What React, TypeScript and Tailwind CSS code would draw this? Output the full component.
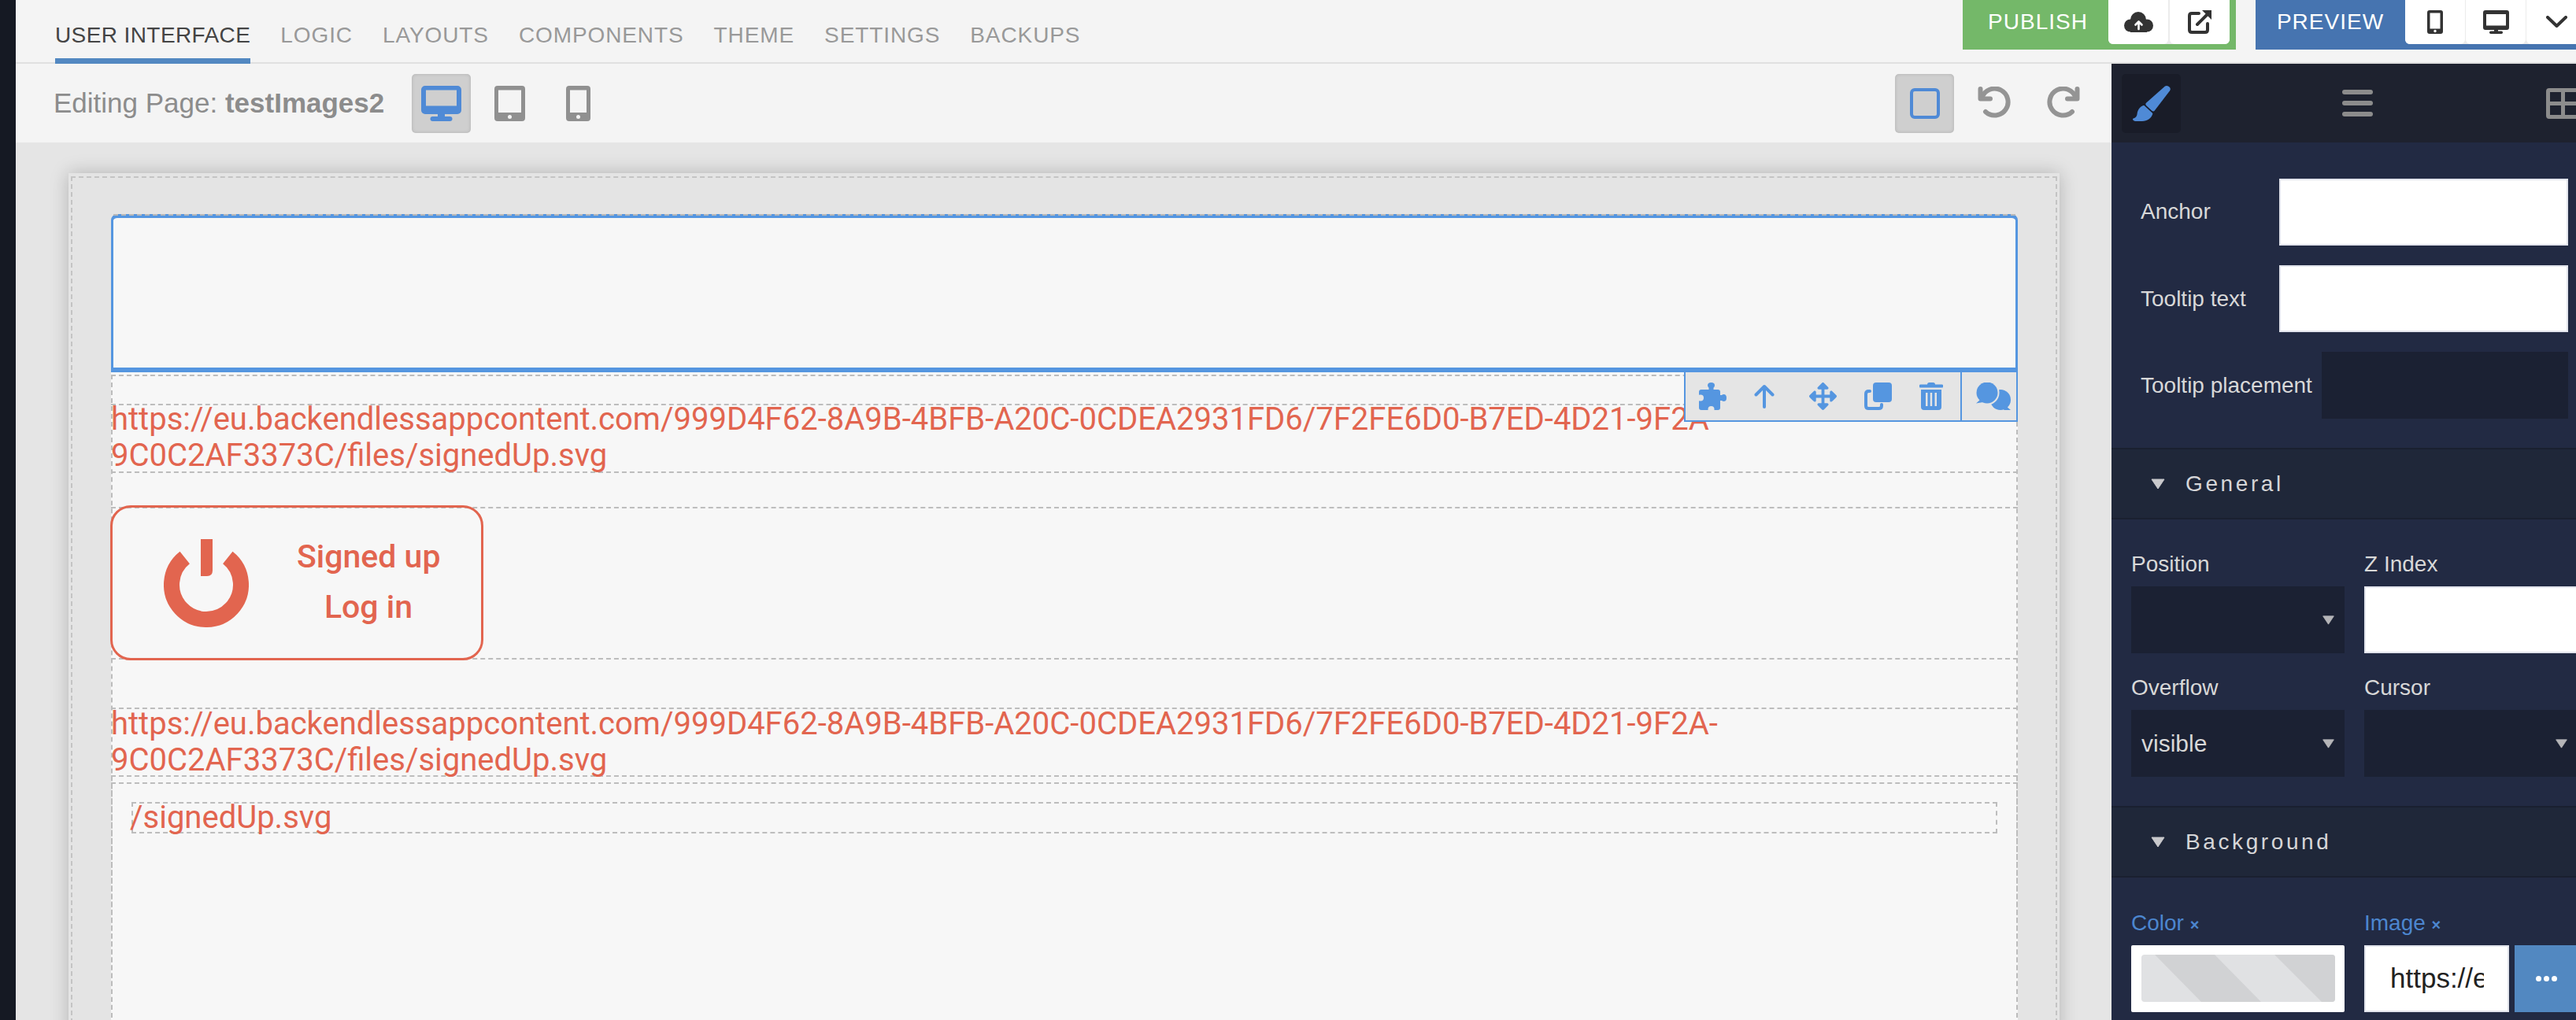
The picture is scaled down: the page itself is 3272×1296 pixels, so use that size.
import { ReactNode } from 'react'
import { FaArrowsAlt } from 'react-icons/fa'

const tabs = ['USER INTERFACE', 'LOGIC', 'LAYOUTS', 'COMPONENTS', 'THEME', 'SETTINGS', 'BACKUPS']
const fileUrl = 'https://eu.backendlessappcontent.com/999D4F62-8A9B-4BFB-A20C-0CDEA2931FD6/7F2FE6D0-B7ED-4D21-9F2A-'

function Desktop({ className }: { className: string }) {
  return (
    <svg viewBox="0 0 51 45" className={className} fill="currentColor">
      <path fillRule="evenodd" d="M5 0h41a5 5 0 0 1 5 5v26a5 5 0 0 1-5 5H5a5 5 0 0 1-5-5V5a5 5 0 0 1 5-5zm1 5.500v20h39v-20z" />
      <rect x="21" y="35" width="9" height="6" />
      <rect x="11.500" y="39" width="28" height="6" rx="3" />
    </svg>
  )
}

function Device({ w, className }: { w: number; className: string }) {
  const cx = w / 2
  return (
    <svg viewBox={`0 0 ${w} 45`} className={className} fill="currentColor">
      <path fillRule="evenodd" d={`M4 0h${w - 8}a4 4 0 0 1 4 4v37a4 4 0 0 1-4 4H4a4 4 0 0 1-4-4V4a4 4 0 0 1 4-4zm1 5.500v28.500h${w - 10}V5.500z`} />
      <circle cx={cx} cy="39.500" r="2.500" fill="#f4f4f4" />
    </svg>
  )
}

function Undo({ className }: { className: string }) {
  return (
    <svg viewBox="0 0 42 42" className={className} fill="none" stroke="currentColor" strokeWidth="6" strokeLinecap="round" strokeLinejoin="round">
      <path d="M3.500 3v12.500H16" />
      <path d="M5.500 14A17 17 0 1 1 10 32" />
    </svg>
  )
}

function Brush() {
  return (
    <svg viewBox="0 0 48 45" className="w-[48px] h-[45px] text-[#4f8ad6]" fill="currentColor">
      <path d="M41 .6c2-1.300 5-.3 6.300 2 .6 1.200.5 2.600-.2 3.700L27.800 31.500c-.8 1-2.200 1.200-3.200.4l-7.600-7c-.9-.9-.9-2.300 0-3.200z" />
      <path d="M15 25.500l9.800 8.900c.5.400.6 1 .4 1.600C23.300 41.600 18.500 44.800 12 44.900H3c-2.600 0-3.800-2.400-2.400-3.500 3.200-.8 4.700-2.700 5-5.700.4-4.300 2.900-8.600 7.200-10.400.8-.4 1.600-.3 2.200.2z" />
    </svg>
  )
}

function Caret({ className }: { className: string }) {
  return (
    <svg viewBox="0 0 18 14" className={className} fill="currentColor">
      <path d="M1 1h16L9 13z" stroke="currentColor" strokeLinejoin="round" />
    </svg>
  )
}

function HeaderButton({ children }: { children: ReactNode }) {
  return (
    <div className="w-[76px] h-[56px] shrink-0 bg-white rounded-b-[6px] flex items-center justify-center text-[#333] pb-[1px]">
      {children}
    </div>
  )
}

function Section({ title }: { title: string }) {
  return (
    <div className="h-[91px] bg-[#1f2739] border-y-2 border-[#1a2030] flex items-center pl-[50px] gap-[26px]">
      <Caret className="w-[18px] h-[14px] text-[#c9c9cc]" />
      <span className="text-[28px] tracking-[3.6px] text-[#d6d6d8] leading-none">{title}</span>
    </div>
  )
}

function SelectBox({ value, className }: { value?: string; className?: string }) {
  return (
    <div className={`h-[85px] bg-[#1b2133] flex items-center justify-between pl-[13px] pr-[12px] text-[30px] text-[#d8d8d8] ${className ?? ''}`}>
      <span>{value}</span>
      <Caret className="w-[17px] h-[12px] text-[#b5b5b8]" />
    </div>
  )
}

function TextBox({ className }: { className?: string }) {
  return <div className={`h-[85px] bg-white border-2 border-[#e2e4ec] ${className ?? ''}`} />
}

function FieldLabel({ children }: { children: ReactNode }) {
  return <div className="text-[28px] leading-[28px] mb-[14px] text-[#d8d8d8]">{children}</div>
}

function ElementToolbar() {
  return (
    <div className="absolute top-[calc(100%+6px)] right-[-3px] z-10 w-[424px] h-[63px] bg-[#e5e5e5] border-2 border-t-0 border-[#5596e0] flex items-center text-[#5596e0]">
      <div className="flex items-center w-[351px] h-full border-r-2 border-[#5596e0] pl-[17px]">
        <svg viewBox="0 0 35 35" className="w-[35px] h-[35px]" fill="currentColor">
          <rect x="0" y="9" width="27" height="26" rx="3" />
          <rect x="12.500" y="3" width="6" height="8" />
          <ellipse cx="15.500" cy="3.500" rx="4.500" ry="3.500" />
          <rect x="25" y="16" width="6" height="7" />
          <ellipse cx="31.500" cy="19.500" rx="3.500" ry="4.500" />
          <circle cx="2" cy="19.500" r="4" fill="#e5e5e5" />
          <circle cx="15.500" cy="34" r="4" fill="#e5e5e5" />
        </svg>
        <svg viewBox="0 0 26 31" className="w-[26px] h-[31px] ml-[35px]" fill="none" stroke="currentColor" strokeWidth="4" strokeLinecap="round" strokeLinejoin="round">
          <path d="M13 29V3M2.500 13.500L13 3l10.500 10.500" />
        </svg>
        <FaArrowsAlt className="w-[35px] h-[35px] ml-[44px]" />
        <svg viewBox="0 0 35 35" className="w-[35px] h-[35px] ml-[35px]" fill="none">
          <rect x="11" y="0" width="24" height="25" rx="4" fill="currentColor" />
          <path d="M7 11H5.500Q2 11 2 14.500V29.500Q2 33 5.500 33H18.500Q22 33 22 29.500V28" stroke="currentColor" strokeWidth="4" strokeLinecap="round" />
        </svg>
        <svg viewBox="0 0 30 35" className="w-[30px] h-[35px] ml-[35px]" fill="currentColor">
          <path d="M10 2.500Q10 0 12.500 0h5Q20 0 20 2.500h8.500a1.500 1.500 0 0 1 0 4h-27a1.500 1.500 0 0 1 0-4z" />
          <path fillRule="evenodd" d="M2 9h26v22q0 4-4 4H6q-4 0-4-4zm6 4v17h2.500V13zm5.700 0v17h2.500V13zm5.800 0v17H22V13z" />
        </svg>
      </div>
      <svg viewBox="0 0 44 35" className="w-[44px] h-[35px] ml-[18px]">
        <circle cx="31" cy="22" r="13" fill="currentColor" />
        <path d="M38 30l6 5h-9z" fill="currentColor" />
        <circle cx="14" cy="13" r="15.500" fill="#e5e5e5" />
        <circle cx="14" cy="13" r="13.500" fill="currentColor" />
        <path d="M5 22L0 26.500 9 25z" fill="currentColor" />
      </svg>
    </div>
  )
}

export default function App() {
  return (
    <div className="flex w-[3272px] h-[1296px] overflow-hidden bg-[#f4f4f4] [font-family:'Liberation_Sans',Arial,sans-serif]">
      <div className="w-[20px] shrink-0 bg-[#151923]" />

      <div className="flex-1 min-w-0 flex flex-col">
        {/* top tabs */}
        <header className="h-[81px] shrink-0 border-b-2 border-[#e0e0e0] flex justify-between pl-[50px]">
          <nav className="flex gap-[38px] h-[81px]">
            {tabs.map((t, i) => (
              <div
                key={t}
                className={`h-full pt-[28px] text-[28px] leading-[34px] border-b-[7px] ${i === 0 ? 'text-[#444] border-[#5288c1] tracking-[0.4px]' : 'text-[#999] border-transparent tracking-[0.9px]'}`}
              >
                {t}
              </div>
            ))}
          </nav>

          <div className="flex gap-[25px] items-start">
            <div className="h-[63px] w-[347px] bg-[#74b869] flex items-start">
              <div className="w-[185px] h-[56px] flex items-center justify-center text-white text-[28px] tracking-[1px] pl-[6px]">PUBLISH</div>
              <div className="flex gap-[2px] bg-[#ececec] rounded-b-[6px]">
                <HeaderButton>
                  <svg viewBox="0 0 37 26" className="w-[37px] h-[26px]" fill="currentColor">
                    <circle cx="18" cy="10" r="10" />
                    <circle cx="8" cy="17.500" r="8" />
                    <circle cx="29" cy="17.500" r="8" />
                    <rect x="8" y="14" width="21" height="12" />
                    <path d="M18.500 22V13M14.500 16.500l4-4 4 4" stroke="#fff" strokeWidth="2.600" fill="none" strokeLinecap="round" strokeLinejoin="round" />
                  </svg>
                </HeaderButton>
                <HeaderButton>
                  <svg viewBox="0 0 30 30" className="w-[30px] h-[30px]" fill="none">
                    <path d="M14 4H5Q2 4 2 7V25Q2 28 5 28H22Q25 28 25 25V17" stroke="currentColor" strokeWidth="4" strokeLinecap="round" />
                    <path d="M12 18L24 6" stroke="currentColor" strokeWidth="4" strokeLinecap="round" />
                    <path d="M18 0H30V12Z" fill="currentColor" />
                  </svg>
                </HeaderButton>
              </div>
            </div>

            <div className="h-[63px] w-[407px] bg-[#4674b0] flex items-start overflow-hidden">
              <div className="w-[190px] shrink-0 h-[56px] flex items-center justify-center text-white text-[28px] tracking-[1px]">PREVIEW</div>
              <div className="flex gap-[1px] bg-[#ececec] rounded-b-[6px]">
                <HeaderButton>
                  <svg viewBox="0 0 20 30" className="w-[20px] h-[30px]" fill="currentColor">
                    <path fillRule="evenodd" d="M3 0h14a3 3 0 0 1 3 3v24a3 3 0 0 1-3 3H3a3 3 0 0 1-3-3V3a3 3 0 0 1 3-3zm.500 3.500v20h13v-20z" />
                    <circle cx="10" cy="26.500" r="1.700" fill="#fff" />
                  </svg>
                </HeaderButton>
                <HeaderButton>
                  <svg viewBox="0 0 33 30" className="w-[33px] h-[30px]" fill="currentColor">
                    <path fillRule="evenodd" d="M3 0h27a3 3 0 0 1 3 3v19a3 3 0 0 1-3 3H3a3 3 0 0 1-3-3V3a3 3 0 0 1 3-3zm1 5v14.500h25V5z" />
                    <rect x="14" y="24" width="5" height="4" />
                    <rect x="8" y="26.500" width="17" height="3.500" rx="1.700" />
                  </svg>
                </HeaderButton>
                <HeaderButton>
                  <svg viewBox="0 0 27 15" className="w-[27px] h-[15px]" fill="none" stroke="currentColor" strokeWidth="4" strokeLinecap="round" strokeLinejoin="round">
                    <path d="M2 2l11.500 11L25 2" />
                  </svg>
                </HeaderButton>
              </div>
            </div>
          </div>
        </header>

        <div className="flex flex-1 min-h-0">
          <div className="flex-1 min-w-0 flex flex-col">
            {/* page toolbar */}
            <div className="h-[100px] shrink-0 flex items-center pl-[48px] pr-[24px]">
              <div className="w-[419px] text-[35px] text-[#8c8c8c] mr-[36px] whitespace-nowrap">
                Editing Page: <b>testImages2</b>
              </div>
              <div className="flex gap-[12px]">
                <div className="w-[75px] h-[75px] rounded-[5px] bg-[#cfcfcf] shadow-[inset_0_0_4px_rgba(0,0,0,0.15)] flex items-center justify-center">
                  <Desktop className="w-[51px] h-[45px] text-[#4f8ad6]" />
                </div>
                <div className="w-[75px] h-[75px] flex items-center justify-center">
                  <Device w={39} className="w-[39px] h-[45px] text-[#909090]" />
                </div>
                <div className="w-[75px] h-[75px] flex items-center justify-center">
                  <Device w={31} className="w-[31px] h-[45px] text-[#909090]" />
                </div>
              </div>
              <div className="ml-auto flex gap-[13px]">
                <div className="w-[75px] h-[75px] rounded-[5px] bg-[#cfcfcf] shadow-[inset_0_0_4px_rgba(0,0,0,0.15)] flex items-center justify-center">
                  <div className="w-[38px] h-[39px] rounded-[6px] border-[4px] border-[#4f8ad6]" />
                </div>
                <div className="w-[75px] h-[75px] flex items-center justify-center">
                  <Undo className="w-[42px] h-[42px] text-[#949494]" />
                </div>
                <div className="w-[75px] h-[75px] flex items-center justify-center">
                  <Undo className="w-[42px] h-[42px] text-[#949494] -scale-x-100" />
                </div>
              </div>
            </div>

            {/* canvas */}
            <div className="flex-1 min-h-0 overflow-hidden bg-[#e5e5e5] pt-[39px] pl-[67px] pr-[66px]">
              <div className="h-[1100px] bg-[#e4e4e4] shadow-[0_0_22px_rgba(0,0,0,0.22)] pt-[4px] px-[3px]">
                <div className="h-full border-2 border-dashed border-[#c4c4c4] pt-[46px] pl-[49px] pr-[48px]">
                  <div className="relative h-[201px] bg-[#f7f7f7] border-x-[3px] border-t-[5px] border-b-[6px] border-[#5596e0] rounded-t-[8px]">
                    <div className="absolute -top-[5px] left-0 right-0 border-t-2 border-dashed border-[#b8b8b8]" />
                    <ElementToolbar />
                  </div>

                  <div className="bg-[#f7f7f7] pt-[3px] h-[900px] [font-family:Roboto,sans-serif] text-[#e2654f]">
                    <div className="h-full border-x-2 border-t-2 border-dashed border-[#bdbdbd] pt-[35px]">
                      <div className="-mx-[2px] h-[88px] border-y-2 border-dashed border-[#bdbdbd]">
                        <div className="-mt-[5px] text-[40px] leading-[46px] whitespace-nowrap">
                          {fileUrl}
                          <br />
                          9C0C2AF3373C/files/signedUp.svg
                        </div>
                      </div>

                      <div className="-mx-[2px] mt-[43px] h-[194px] border-y-2 border-dashed border-[#bdbdbd]">
                        <div className="-mt-[4px] -ml-[1px] w-[474px] h-[197px] rounded-[26px] border-[3px] border-[#e2654f] flex items-center pl-[65px]">
                          <svg viewBox="0 0 108 112" className="w-[108px] h-[112px] shrink-0" fill="none">
                            <path d="M26.700 23.500A44 44 0 1 0 81.300 23.500" stroke="currentColor" strokeWidth="20" />
                            <path d="M47 0H62V40Q62 47 55 47H47Z" fill="currentColor" />
                          </svg>
                          <div className="w-[182px] ml-[61px] -mt-[3px] text-center text-[41px] leading-[64px] font-medium whitespace-nowrap">
                            Signed up
                            <br />
                            Log in
                          </div>
                        </div>
                      </div>

                      <div className="-mx-[2px] mt-[61px] h-[88px] border-y-2 border-dashed border-[#bdbdbd]">
                        <div className="-mt-[4px] text-[40px] leading-[46px] whitespace-nowrap">
                          {fileUrl}
                          <br />
                          9C0C2AF3373C/files/signedUp.svg
                        </div>
                      </div>

                      <div className="-mx-[2px] mt-[7px] h-[400px] border-2 border-dashed border-[#bdbdbd] pt-[23px] px-[24px]">
                        <div className="h-[40px] border-2 border-dashed border-[#bdbdbd]">
                          <div className="-mt-[5px] -ml-[4px] text-[40px] leading-[46px] whitespace-nowrap">/signedUp.svg</div>
                        </div>
                      </div>
                    </div>
                  </div>
                </div>
              </div>
            </div>
          </div>

          {/* properties panel */}
          <aside className="w-[590px] shrink-0 overflow-hidden bg-[#222a43] flex flex-col">
            <div className="h-[100px] shrink-0 bg-[#1e222f] flex items-center pl-[13px] gap-[187px]">
              <div className="w-[75px] h-[75px] shrink-0 rounded-[5px] bg-[#191c28] flex items-center justify-center">
                <Brush />
              </div>
              <div className="w-[75px] shrink-0 flex flex-col items-center gap-[8px]">
                <div className="w-[39px] h-[6px] rounded-full bg-[#8c8c8c]" />
                <div className="w-[39px] h-[6px] rounded-full bg-[#8c8c8c]" />
                <div className="w-[39px] h-[6px] rounded-full bg-[#8c8c8c]" />
              </div>
              <div className="w-[75px] shrink-0 flex justify-center">
                <svg viewBox="0 0 45 39" className="w-[45px] h-[39px] shrink-0" fill="#8c8c8c">
                  <path fillRule="evenodd" d="M4 0h37a4 4 0 0 1 4 4v31a4 4 0 0 1-4 4H4a4 4 0 0 1-4-4V4a4 4 0 0 1 4-4zm1 5v12h14V5zm19 0v12h16V5zM5 22v12h14V22zm19 0v12h16V22z" />
                </svg>
              </div>
            </div>

            <div className="pt-[46px] pl-[37px] pr-[10px] pb-[37px] flex flex-col gap-[25px] text-[28px] text-[#d8d8d8]">
              <div className="flex items-center justify-between">
                <span className="-mt-[2px]">Anchor</span>
                <TextBox className="w-[367px]" />
              </div>
              <div className="flex items-center justify-between">
                <span>Tooltip text</span>
                <TextBox className="w-[367px]" />
              </div>
              <div className="flex items-center justify-between">
                <span>Tooltip placement</span>
                <div className="w-[313px] h-[85px] bg-[#1b2133]" />
              </div>
            </div>

            <Section title="General" />
            <div className="pt-[43px] pl-[25px] pb-[37px] grid grid-cols-[271px_271px] gap-x-[25px] gap-y-[30px]">
              <div>
                <FieldLabel>Position</FieldLabel>
                <SelectBox />
              </div>
              <div>
                <FieldLabel>Z Index</FieldLabel>
                <TextBox />
              </div>
              <div>
                <FieldLabel>Overflow</FieldLabel>
                <SelectBox value="visible" />
              </div>
              <div>
                <FieldLabel>Cursor</FieldLabel>
                <SelectBox />
              </div>
            </div>

            <Section title="Background" />
            <div className="pt-[44px] pl-[25px] grid grid-cols-[271px_271px] gap-x-[25px]">
              <div>
                <div className="h-[28px] text-[28px] leading-[28px] mb-[14px] text-[#4c86cf]">
                  Color <span className="text-[20px] leading-none font-bold">×</span>
                </div>
                <div className="h-[85px] bg-white rounded-[2px] pt-[12px] pl-[13px]">
                  <div className="w-[246px] h-[60px] rounded-[4px] overflow-hidden bg-[#e0e1e3]">
                    <svg viewBox="0 0 246 60" className="w-[246px] h-[60px]" fill="#d1d2d4">
                      <path d="M17 0H93L152 60H76Z" />
                      <path d="M169 0H246V60H229Z" />
                    </svg>
                  </div>
                </div>
              </div>
              <div>
                <div className="h-[28px] text-[28px] leading-[28px] mb-[14px] text-[#4c86cf]">
                  Image <span className="text-[20px] leading-none font-bold">×</span>
                </div>
                <div className="flex gap-[7px]">
                  <div className="w-[184px] h-[85px] shrink-0 bg-white border-2 border-[#e2e4ec] pl-[31px] flex items-center text-[35px] text-[#222] overflow-hidden">
                    <span className="block w-[119px] overflow-hidden whitespace-nowrap">https://eu.backendlessappcontent.com</span>
                  </div>
                  <div className="w-[80px] h-[85px] shrink-0 bg-[#5288c1] flex items-center justify-center gap-[3px]">
                    <span className="w-[7px] h-[7px] rounded-full bg-white" />
                    <span className="w-[7px] h-[7px] rounded-full bg-white" />
                    <span className="w-[7px] h-[7px] rounded-full bg-white" />
                  </div>
                </div>
              </div>
            </div>
          </aside>
        </div>
      </div>
    </div>
  )
}
